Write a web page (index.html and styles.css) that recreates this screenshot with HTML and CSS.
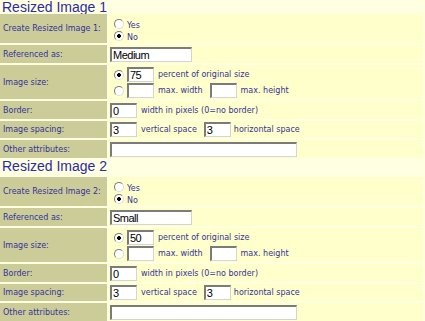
FILE: index.html
```html
<!DOCTYPE html>
<html lang="en">
<head>
  <meta charset="UTF-8" />
  <title>Resized Images</title>
  <link rel="stylesheet" href="styles.css">
</head>
<body>
  <h2 class="section-title">Resized Image 1</h2>
  <div class="form-grid">
    <div class="label">Create Resized Image 1:</div>
    <div class="value choices">
      <label class="opt"><input type="radio" class="radio" name="create1"><span>Yes</span></label>
      <label class="opt"><input type="radio" class="radio" name="create1" checked><span>No</span></label>
    </div>

    <div class="label">Referenced as:</div>
    <div class="value"><input type="text" class="field w-md" value="Medium"></div>

    <div class="label">Image size:</div>
    <div class="value sizes">
      <div class="line">
        <input type="radio" class="radio" name="size1" checked>
        <input type="text" class="field w-xs" value="75">
        <span class="hint">percent of original size</span>
      </div>
      <div class="line">
        <input type="radio" class="radio" name="size1">
        <input type="text" class="field w-xs">
        <span class="hint">max. width</span>
        <input type="text" class="field w-xs push">
        <span class="hint">max. height</span>
      </div>
    </div>

    <div class="label">Border:</div>
    <div class="value">
      <input type="text" class="field w-xs" value="0">
      <span class="hint">width in pixels (0=no border)</span>
    </div>

    <div class="label">Image spacing:</div>
    <div class="value">
      <input type="text" class="field w-xs" value="3">
      <span class="hint">vertical space</span>
      <input type="text" class="field w-xs push" value="3">
      <span class="hint tight">horizontal space</span>
    </div>

    <div class="label">Other attributes:</div>
    <div class="value"><input type="text" class="field w-lg"></div>
  </div>

  <h2 class="section-title second">Resized Image 2</h2>
  <div class="form-grid">
    <div class="label">Create Resized Image 2:</div>
    <div class="value choices">
      <label class="opt"><input type="radio" class="radio" name="create2"><span>Yes</span></label>
      <label class="opt"><input type="radio" class="radio" name="create2" checked><span>No</span></label>
    </div>

    <div class="label">Referenced as:</div>
    <div class="value"><input type="text" class="field w-md" value="Small"></div>

    <div class="label">Image size:</div>
    <div class="value sizes">
      <div class="line">
        <input type="radio" class="radio" name="size2" checked>
        <input type="text" class="field w-xs" value="50">
        <span class="hint">percent of original size</span>
      </div>
      <div class="line">
        <input type="radio" class="radio" name="size2">
        <input type="text" class="field w-xs">
        <span class="hint">max. width</span>
        <input type="text" class="field w-xs push">
        <span class="hint">max. height</span>
      </div>
    </div>

    <div class="label">Border:</div>
    <div class="value">
      <input type="text" class="field w-xs" value="0">
      <span class="hint">width in pixels (0=no border)</span>
    </div>

    <div class="label">Image spacing:</div>
    <div class="value">
      <input type="text" class="field w-xs" value="3">
      <span class="hint">vertical space</span>
      <input type="text" class="field w-xs push" value="3">
      <span class="hint tight">horizontal space</span>
    </div>

    <div class="label">Other attributes:</div>
    <div class="value"><input type="text" class="field w-lg"></div>
  </div>
</body>
</html>
```

FILE: styles.css
```css
/* Base */
* {
  box-sizing: border-box;
}
body {
  margin: 0;
  background: #ffffe1;
  color: #333399;
  font-family: "DejaVu Sans", Verdana, sans-serif;
  font-size: 8px;
}
/* Section headings */
.section-title {
  margin: 0;
  padding-left: 2px;
  font: normal 14px/14px "Liberation Sans", Arial, sans-serif;
  color: #2b2ba6;
}
.section-title.second {
  margin: 1px 0 4px;
}
/* Form table */
.form-grid {
  display: grid;
  grid-template-columns: 107px 314px;
  grid-template-rows: 29px 18px 34px 18px 17px 18px;
  gap: 2px;
}
.label {
  background: #cccc99;
  padding-left: 3px;
  display: flex;
  align-items: center;
}
.value {
  background: #ffffcc;
  padding-left: 1px;
  display: flex;
  align-items: center;
}
/* Yes / No choice */
.choices {
  flex-direction: column;
  align-items: flex-start;
  justify-content: flex-start;
  padding-top: 5px;
}
.opt {
  display: flex;
  align-items: flex-start;
  height: 13px;
}
.opt span {
  line-height: 8px;
  padding-top: 3px;
}
/* Image size lines */
.sizes {
  flex-direction: column;
  align-items: flex-start;
  justify-content: flex-start;
  padding-top: 2px;
  gap: 1px;
}
.line {
  display: flex;
  align-items: center;
  height: 15px;
}
/* Controls */
.radio {
  appearance: none;
  width: 10px;
  height: 10px;
  margin: 0 3px 0 4px;
  border-radius: 50%;
  border: 1px solid;
  border-color: #7b7b7b #dcdcdc #dcdcdc #7b7b7b;
  background: #fff;
}
.radio:checked {
  background: radial-gradient(circle, #000 0 1.6px, #fff 2.2px);
}
.line .radio {
  margin-right: 3px;
}
.field {
  height: 15px;
  margin: 0;
  padding: 0 1px;
  border-style: solid;
  border-width: 2px 1px 1px 2px;
  border-color: #7b7b7b #d4d4d4 #d4d4d4 #7b7b7b;
  background: #fff;
  color: #000;
  font: 11px "Liberation Sans", Arial, sans-serif;
  letter-spacing: -0.5px;
}
.w-xs { width: 27px; }
.w-md { width: 82px; }
.w-lg { width: 187px; }
.field.push {
  margin-left: 7px;
}
.hint {
  margin-left: 4px;
}
.hint.tight {
  margin-left: 3px;
}
```
